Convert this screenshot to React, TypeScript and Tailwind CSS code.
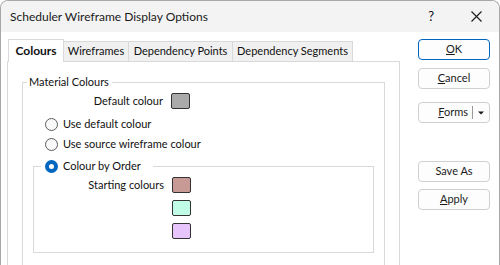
import React from "react";

const font = { fontFamily: 'Lato, "Liberation Sans", sans-serif' };

function Radio({ checked }: { checked?: boolean }) {
  return checked ? (
    <span className="w-[13px] h-[13px] rounded-full bg-[#0067c0] flex items-center justify-center shrink-0">
      <span className="w-[5px] h-[5px] rounded-full bg-white" />
    </span>
  ) : (
    <span className="w-[13px] h-[13px] rounded-full border border-[#5c5c5c] bg-[#f9f9f9] shrink-0" />
  );
}

function Swatch({ color }: { color: string }) {
  return <span className="block w-[19px] h-[16px] border border-[#333] rounded-[2px]" style={{ background: color }} />;
}

function Btn({ children, primary }: { children: React.ReactNode; primary?: boolean }) {
  return (
    <div
      className={
        "h-[21px] w-[72px] rounded-[4px] flex items-center justify-center text-[11px] text-[#1b1b1b] bg-[#fdfdfd] " +
        (primary ? "border border-[#0067c0]" : "border border-[#d0d0d0]")
      }
    >
      {children}
    </div>
  );
}

export default function App() {
  return (
    <div
      className="w-[500px] h-[265px] bg-white border-l border-r border-t border-[#a8a8a8] rounded-t-[8px] overflow-hidden flex flex-col text-[11px] text-[#111] whitespace-nowrap"
      style={font}
    >
      {/* Title bar */}
      <div className="h-[31px] bg-[#f3f3f3] flex items-center pl-[9px] shrink-0">
        <span className="text-[12px] text-[#1a1a1a]">Scheduler Wireframe Display Options</span>
        <span className="ml-auto mr-[37px] text-[13px]">?</span>
        <svg width="11" height="11" viewBox="0 0 11 11" className="mr-[17px]">
          <path d="M0.5 0.5 L10.5 10.5 M10.5 0.5 L0.5 10.5" stroke="#1a1a1a" strokeWidth="1.1" />
        </svg>
      </div>

      {/* Body */}
      <div className="flex flex-1 min-h-0">
        {/* Left: tabs */}
        <div className="pl-[6px] pt-[7px] flex flex-col w-[399px]">
          <div className="flex items-end h-[22px] relative z-10">
            <div className="ml-[1px] w-[56px] h-[23px] -mb-[1px] bg-white border-l border-t border-r border-[#d9d9d9] flex items-center justify-center font-bold text-[12px]">
              Colours
            </div>
            <div className="w-[65px] h-[20px] bg-[#f0f0f0] border-t border-r border-[#d9d9d9] flex items-center justify-center">
              Wireframes
            </div>
            <div className="w-[104px] h-[20px] bg-[#f0f0f0] border-t border-r border-[#d9d9d9] flex items-center justify-center">
              Dependency Points
            </div>
            <div className="w-[120px] h-[20px] bg-[#f0f0f0] border-t border-r border-[#d9d9d9] flex items-center justify-center">
              Dependency Segments
            </div>
          </div>
          <div className="flex-1 border border-[#d9d9d9] border-b-0 pl-[14px] pr-[14px] pt-[12px]">
            <fieldset className="border border-[#d9d9d9] border-b-0 pl-[4px] pr-[10px] h-full m-0 min-w-0">
              <legend className="pl-[2px] pr-[3px] leading-[16px]">Material Colours</legend>
              <div className="flex items-center mt-[3px] h-[16px]">
                <span className="w-[136px] text-right">Default colour</span>
                <span className="ml-[8px]">
                  <Swatch color="#aaaaaa" />
                </span>
              </div>
              <div className="flex items-center gap-[5px] ml-[18px] mt-[7px] h-[16px]">
                <Radio />
                <span>Use default colour</span>
              </div>
              <div className="flex items-center gap-[5px] ml-[18px] mt-[4px] h-[16px]">
                <Radio />
                <span>Use source wireframe colour</span>
              </div>
              <fieldset className="border border-[#d9d9d9] ml-[6px] mt-[6px] pl-[7px] pr-0 pb-[13px] m-0 min-w-0">
                <legend className="pl-[4px] pr-[12px] leading-[16px]">
                  <span className="flex items-center gap-[5px]">
                    <Radio checked />
                    <span>Colour by Order</span>
                  </span>
                </legend>
                <div className="flex flex-col gap-[7px] mt-[3px]">
                  <div className="flex items-center h-[16px]">
                    <span className="w-[123px] text-right">Starting colours</span>
                    <span className="ml-[8px]">
                      <Swatch color="#c89a96" />
                    </span>
                  </div>
                  <div className="flex items-center h-[16px]">
                    <span className="w-[123px]" />
                    <span className="ml-[8px]">
                      <Swatch color="#c0fce6" />
                    </span>
                  </div>
                  <div className="flex items-center h-[16px]">
                    <span className="w-[123px]" />
                    <span className="ml-[8px]">
                      <Swatch color="#e8c4fc" />
                    </span>
                  </div>
                </div>
              </fieldset>
            </fieldset>
          </div>
        </div>

        {/* Right: buttons */}
        <div className="ml-[18px] pt-[7px] flex flex-col">
          <Btn primary>
            <span><u>O</u>K</span>
          </Btn>
          <div className="mt-[8px]">
            <Btn>
              <span><u>C</u>ancel</span>
            </Btn>
          </div>
          <div className="mt-[13px] h-[21px] w-[72px] rounded-[4px] border border-[#d0d0d0] bg-[#fdfdfd] flex items-center text-[11px] text-[#1b1b1b]">
            <span className="flex-1 text-right pr-[4px]"><u>F</u>orms</span>
            <span className="w-px h-[13px] bg-[#9a9a9a]" />
            <svg width="16" height="6" viewBox="0 0 16 6">
              <path d="M5 1.5 L11 1.5 L8 4.5 Z" fill="#1a1a1a" />
            </svg>
          </div>
          <div className="mt-[38px]">
            <Btn>Save As</Btn>
          </div>
          <div className="mt-[7px]">
            <Btn>
              <span><u>A</u>pply</span>
            </Btn>
          </div>
        </div>
      </div>
    </div>
  );
}
